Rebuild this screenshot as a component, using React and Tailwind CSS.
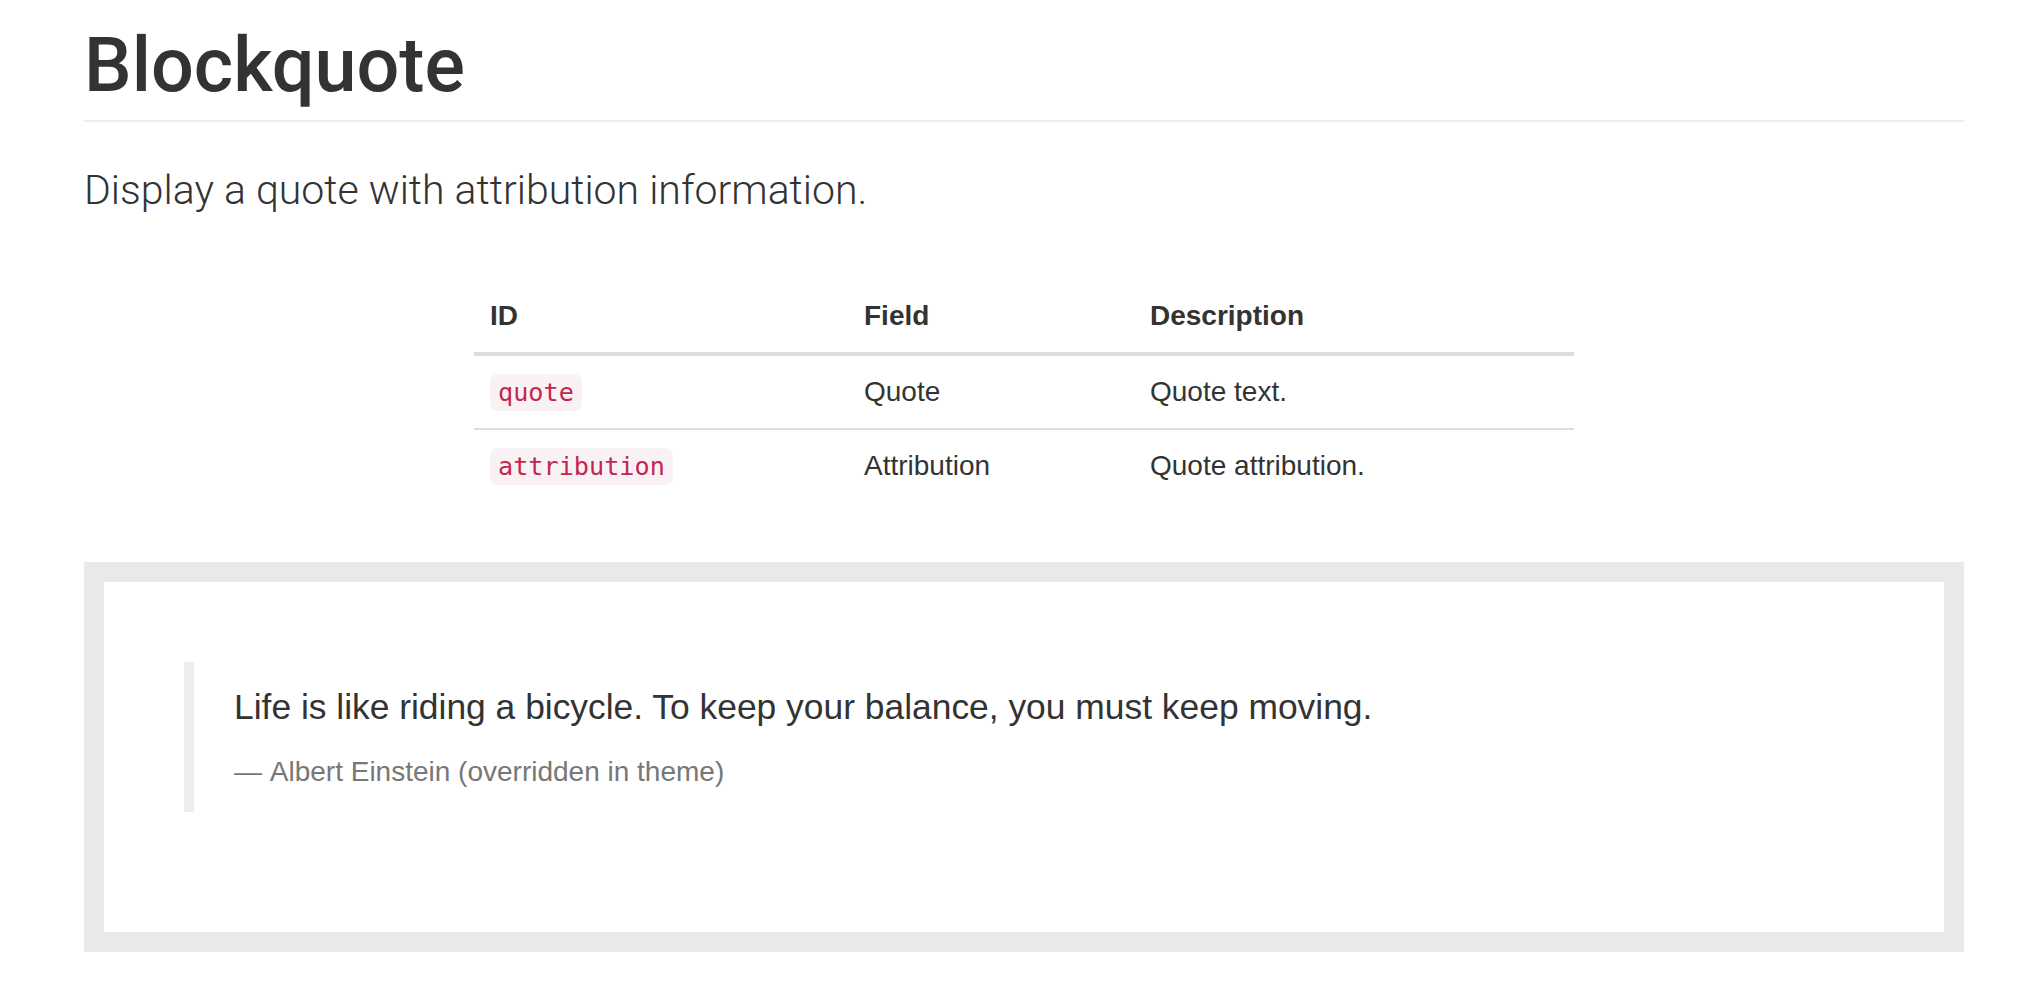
export default function App() {
  const rows = [
    { id: "quote", field: "Quote", desc: "Quote text." },
    { id: "attribution", field: "Attribution", desc: "Quote attribution." },
  ];
  return (
    <div className="min-h-screen bg-white text-[#333] [font-family:'Liberation_Sans',Arial,sans-serif]">
      <div className="ml-[84px] w-[1880px]">
        <h1 className="mt-[24px] pb-[14px] border-b-2 border-[#eeeeee] text-[75.5px] leading-[82px] font-medium [font-family:Roboto,'Liberation_Sans',sans-serif] text-[#333]">
          Blockquote
        </h1>
        <p className="mt-[40px] text-[41px] leading-[56px] font-light [font-family:Roboto,'Liberation_Sans',sans-serif] text-[#333]">
          Display a quote with attribution information.
        </p>
        <div className="mt-[62px] flex justify-center">
          <table className="w-[1100px] table-fixed border-collapse text-[28px] leading-[40px]">
            <colgroup>
              <col className="w-[374px]" />
              <col className="w-[286px]" />
              <col className="w-[440px]" />
            </colgroup>
            <thead>
              <tr className="border-b-4 border-[#dddddd]">
                <th className="p-[16px] text-left font-bold">ID</th>
                <th className="p-[16px] text-left font-bold">Field</th>
                <th className="p-[16px] text-left font-bold">Description</th>
              </tr>
            </thead>
            <tbody>
              {rows.map((r, i) => (
                <tr key={r.id} className={i > 0 ? "border-t-2 border-[#dddddd]" : ""}>
                  <td className="h-[72px] p-[16px]">
                    <code className="px-[8px] py-[4px] rounded-[8px] bg-[#f9f2f4] text-[#c7254e] text-[25.2px] leading-none [font-family:'DejaVu_Sans_Mono',Menlo,monospace]">
                      {r.id}
                    </code>
                  </td>
                  <td className="h-[72px] p-[16px]">{r.field}</td>
                  <td className="h-[72px] p-[16px]">{r.desc}</td>
                </tr>
              ))}
            </tbody>
          </table>
        </div>
        <div className="mt-[60px] border-[20px] border-[#e9e9e9] bg-white p-[80px]">
          <blockquote className="mb-[40px] border-l-[10px] border-[#eeeeee] py-[20px] pl-[40px] pr-[40px]">
            <p className="mb-[20px] text-[35.4px] leading-[50px] text-[#333]">
              Life is like riding a bicycle. To keep your balance, you must keep moving.
            </p>
            <footer className="text-[28px] leading-[40px] text-[#777]">
              {"\u2014\u00a0"}Albert Einstein (overridden in theme)
            </footer>
          </blockquote>
        </div>
      </div>
    </div>
  );
}
